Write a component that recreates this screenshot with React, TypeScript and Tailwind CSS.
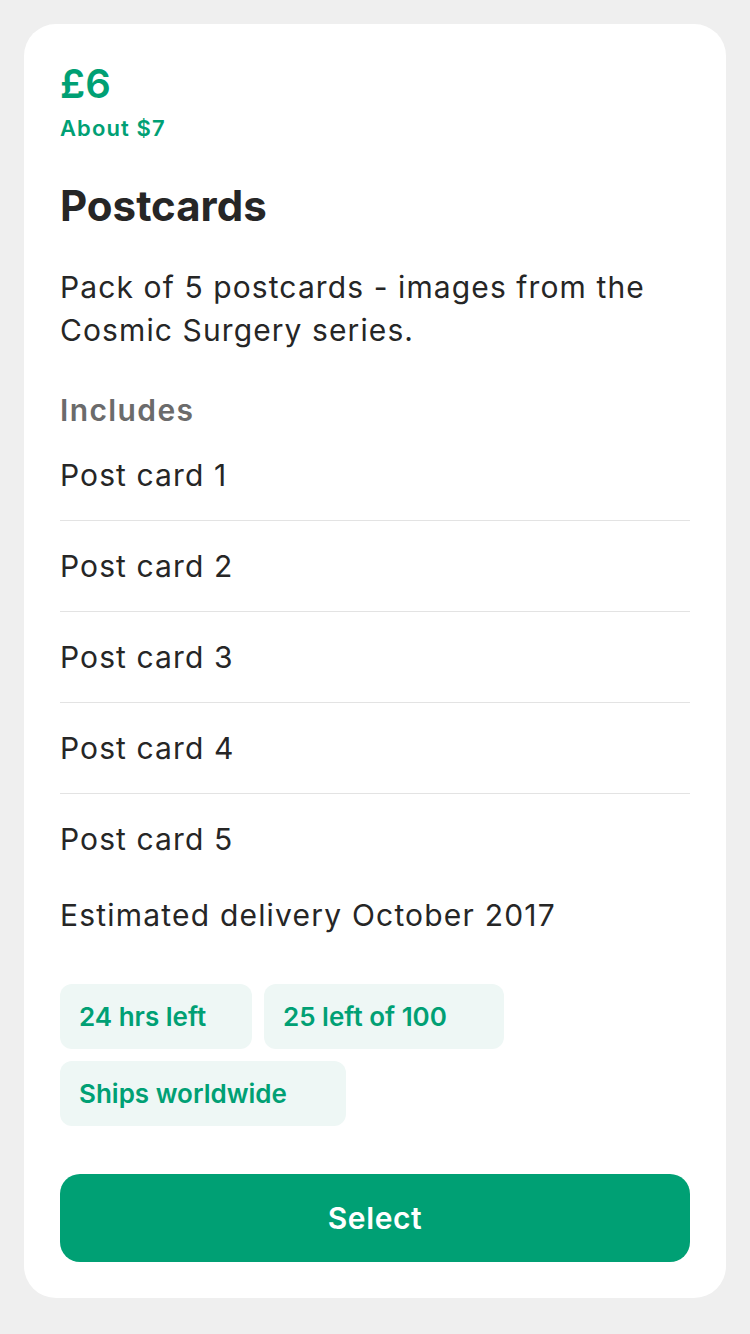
const items = ['Post card 1', 'Post card 2', 'Post card 3', 'Post card 4', 'Post card 5'];

const tags = [
  { label: '24 hrs left', w: 'w-[192px]' },
  { label: '25 left of 100', w: 'w-[240px]' },
  { label: 'Ships worldwide', w: 'w-[286px]' },
];

export default function App() {
  return (
    <div
      className="min-h-screen bg-[#efefef] p-6"
      style={{ fontFamily: 'Inter, "Noto Sans", sans-serif' }}
    >
      <div className="rounded-[32px] bg-white px-9 pt-9 pb-[36px]">
        {/* price */}
        <div className="text-[40px] leading-[48px] font-semibold text-[#00a074]">£6</div>
        <div className="mt-[6px] text-[22px] leading-[28px] font-semibold tracking-[1.1px] text-[#00a074]">About $7</div>

        <h1 className="mt-[39px] text-[42px] leading-[50px] font-bold text-[#262626]">Postcards</h1>

        <p className="mt-[35px] text-[30px] leading-[43px] tracking-[1.1px] text-[#262626]">
          Pack of 5 postcards - images from the Cosmic Surgery series.
        </p>

        <div className="mt-[38px] text-[30px] leading-[40px] font-semibold tracking-[1.4px] text-[#6b6b6b]">Includes</div>

        <ul>
          {items.map((it, i) => (
            <li
              key={it}
              className={
                'flex h-[91px] items-center text-[30px] tracking-[1.1px] text-[#262626] ' +
                (i < items.length - 1 ? 'border-b border-[#e3e3e3]' : '')
              }
            >
              {it}
            </li>
          ))}
        </ul>

        <div className="mt-[10px] text-[30px] leading-[40px] tracking-[1.2px] text-[#262626]">Estimated delivery October 2017</div>

        <div className="mt-[49px] flex flex-wrap gap-3">
          {tags.map(t => (
            <div
              key={t.label}
              className={`${t.w} flex h-[65px] items-center rounded-xl bg-[#eef7f5] pl-[19px] text-[26px] font-semibold text-[#00a074]`}
            >
              {t.label}
            </div>
          ))}
        </div>

        <button className="mt-12 flex h-[88px] w-full items-center justify-center rounded-[20px] bg-[#00a074] text-[30px] font-semibold tracking-[0.6px] text-white">
          Select
        </button>
      </div>
    </div>
  );
}
